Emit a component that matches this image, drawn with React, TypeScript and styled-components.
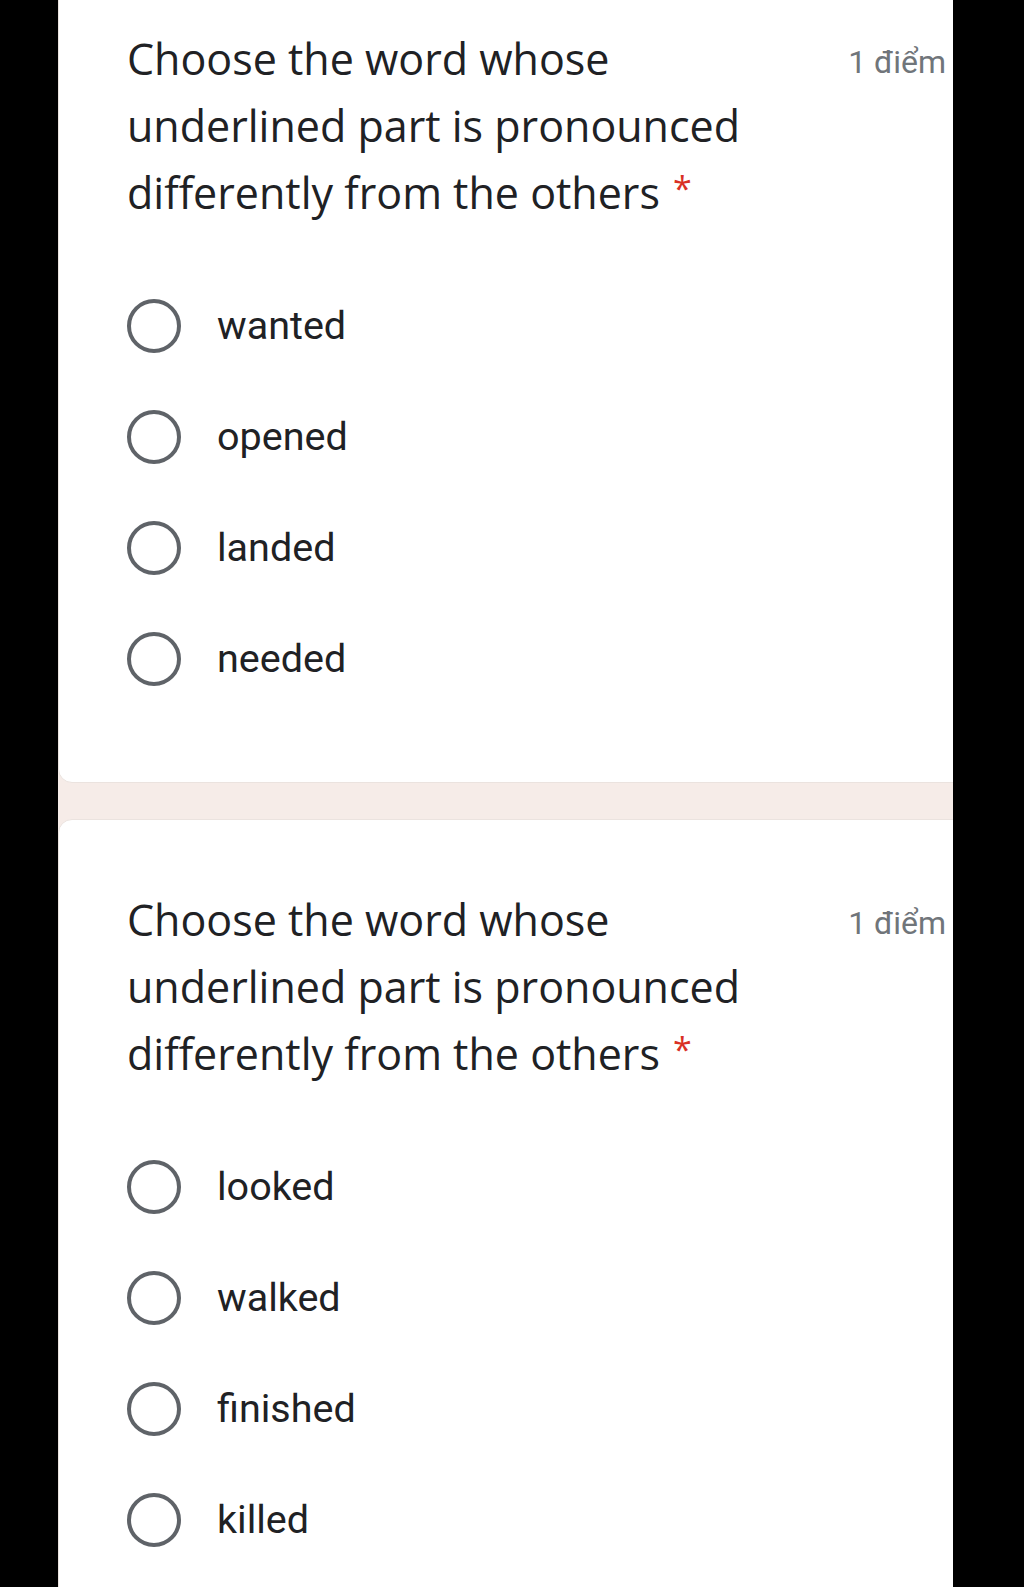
import styled, { createGlobalStyle } from "styled-components";

const GlobalStyle = createGlobalStyle`
    html, body {
        margin: 0;
        padding: 0;
        background: #000;
    }
    body {
        font-family: Roboto, "Liberation Sans", Arial, sans-serif;
    }
`;

// the phone screen between the two black bars
const Screen = styled.div`
    width: 895px;
    height: 1587px;
    margin-left: 58px;
    background: #f6ece8;
    overflow: hidden;
`;

const Feed = styled.div`
    display: flex;
    flex-direction: column;
    gap: 36px;
    margin-top: -42px;
`;

// card is a bit wider than the screen, its right corners are cut off
const Card = styled.section`
    width: calc(100% + 24px);
    box-sizing: border-box;
    background: #fff;
    border: 1px solid #ebe3df;
    border-radius: 14px;
    padding: 66px 30px 68px 68px;
`;

const Head = styled.div`
    display: flex;
    justify-content: space-between;
    align-items: flex-start;
`;

const Title = styled.h2`
    width: 660px;
    margin: 0;
    font-family: "Open Sans", Roboto, sans-serif;
    font-weight: 400;
    font-size: 43px;
    line-height: 67px;
    color: #202124;
`;

const Required = styled.span`
    position: relative;
    top: -8px;
    margin-left: 13px;
    color: #d93025;
    font-size: 34px;
    line-height: 0;
`;

const Points = styled.span`
    font-size: 32px;
    line-height: 67px;
    margin-top: 4px;
    color: #70757a;
    white-space: nowrap;
`;

const Options = styled.div`
    display: flex;
    flex-direction: column;
    margin-top: 44px;
`;

const Option = styled.label`
    display: flex;
    align-items: center;
    gap: 36px;
    height: 111px;
    cursor: pointer;
`;

const Radio = styled.span`
    width: 54px;
    height: 54px;
    box-sizing: border-box;
    border: 4px solid #5f6368;
    border-radius: 50%;
    flex: none;
`;

const OptionText = styled.span`
    font-size: 39.5px;
    color: #202124;
`;

interface IQuestion {
    id: number;
    title: string;
    points: string;
    options: string[];
}

const questions: IQuestion[] = [
    {
        id: 1,
        title: "Choose the word whose underlined part is pronounced differently from the others",
        points: "1 điểm",
        options: ["wanted", "opened", "landed", "needed"],
    },
    {
        id: 2,
        title: "Choose the word whose underlined part is pronounced differently from the others",
        points: "1 điểm",
        options: ["looked", "walked", "finished", "killed"],
    },
];

function App() {
    return (
        <>
            <GlobalStyle />
            <Screen>
                <Feed>
                    {questions.map(q => (
                        <Card key={q.id}>
                            <Head>
                                <Title>
                                    {q.title}
                                    <Required>*</Required>
                                </Title>
                                <Points>{q.points}</Points>
                            </Head>
                            <Options>
                                {q.options.map(opt => (
                                    <Option key={opt}>
                                        <Radio />
                                        <OptionText>{opt}</OptionText>
                                    </Option>
                                ))}
                            </Options>
                        </Card>
                    ))}
                </Feed>
            </Screen>
        </>
    );
}

export default App;
